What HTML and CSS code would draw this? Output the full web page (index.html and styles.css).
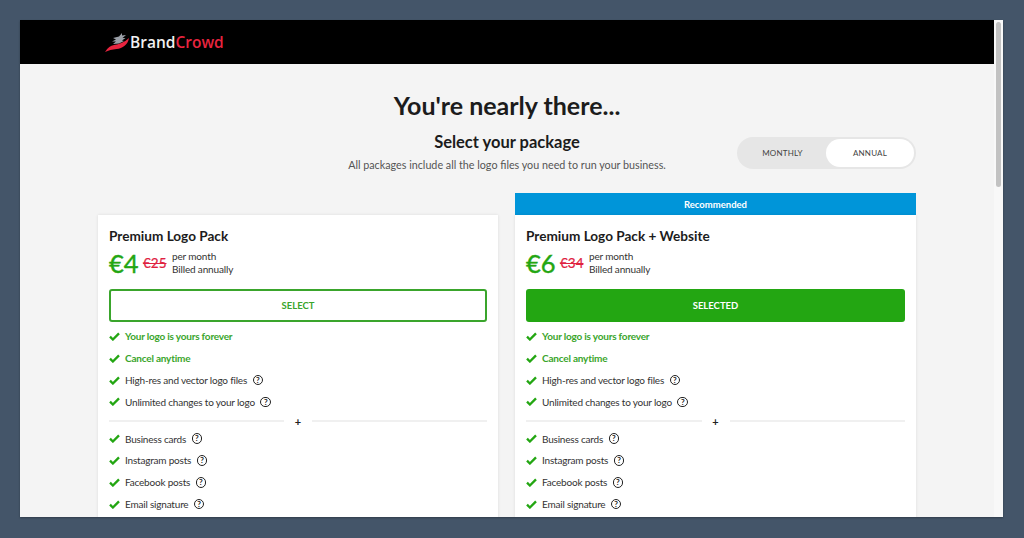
FILE: index.html
```html
<!DOCTYPE html>
<html lang="en">
<head>
<meta charset="utf-8">
<title>BrandCrowd</title>
<link rel="stylesheet" href="styles.css">
</head>
<body>
<div class="window">
  <div class="page">
    <header class="topbar">
      <div class="logo">
        <svg class="logo-mark" width="24" height="20" viewBox="0 0 24 20">
          <path d="M8 6 L14 4.500 L17 1 L17 3.500 L21 3 L17.500 6 L20.500 6 L17 8.500 L19 9 L14 11.500 L8 12 L11 9.500 L7 9.500 L11 7.500 Z" fill="#9a9fa7"/>
          <path d="M0 20 C3 15.500 5.500 13.500 9 13 C14 12.300 20 10 24 6 C23 12.500 17.500 16.500 11.500 17 C7 17.300 3.500 18.500 0 20 Z" fill="#e8243f"/>
        </svg>
        <span class="logo-text">Brand<span class="logo-red">Crowd</span></span>
      </div>
    </header>
    <main class="content">
      <h1 class="title">You're nearly there...</h1>
      <div class="intro">
        <div class="intro-text">
          <h2 class="subtitle">Select your package</h2>
          <p class="note">All packages include all the logo files you need to run your business.</p>
        </div>
        <div class="toggle">
          <span class="toggle-opt">MONTHLY</span>
          <span class="toggle-opt toggle-on">ANNUAL</span>
        </div>
      </div>
      <div class="plans">
        <section class="plan">
          <div class="card">
            <h3 class="plan-name">Premium Logo Pack</h3>
            <div class="price-row">
              <span class="price">€4</span>
              <span class="old-price">€25</span>
              <span class="price-note">per month<br>Billed annually</span>
            </div>
            <button class="btn btn-outline">SELECT</button>
            <ul class="features">
              <li class="feat feat-green"><svg class="check" viewBox="0 0 12 10"><path d="M1 5.200 L4.200 8.300 L11 1.500" fill="none" stroke="#23a612" stroke-width="2.600"/></svg>Your logo is yours forever</li>
              <li class="feat feat-green"><svg class="check" viewBox="0 0 12 10"><path d="M1 5.200 L4.200 8.300 L11 1.500" fill="none" stroke="#23a612" stroke-width="2.600"/></svg>Cancel anytime</li>
              <li class="feat"><svg class="check" viewBox="0 0 12 10"><path d="M1 5.200 L4.200 8.300 L11 1.500" fill="none" stroke="#23a612" stroke-width="2.600"/></svg>High-res and vector logo files<span class="help">?</span></li>
              <li class="feat"><svg class="check" viewBox="0 0 12 10"><path d="M1 5.200 L4.200 8.300 L11 1.500" fill="none" stroke="#23a612" stroke-width="2.600"/></svg>Unlimited changes to your logo<span class="help">?</span></li>
            </ul>
            <div class="divider"><span class="plus">+</span></div>
            <ul class="features">
              <li class="feat"><svg class="check" viewBox="0 0 12 10"><path d="M1 5.200 L4.200 8.300 L11 1.500" fill="none" stroke="#23a612" stroke-width="2.600"/></svg>Business cards<span class="help">?</span></li>
              <li class="feat"><svg class="check" viewBox="0 0 12 10"><path d="M1 5.200 L4.200 8.300 L11 1.500" fill="none" stroke="#23a612" stroke-width="2.600"/></svg>Instagram posts<span class="help">?</span></li>
              <li class="feat"><svg class="check" viewBox="0 0 12 10"><path d="M1 5.200 L4.200 8.300 L11 1.500" fill="none" stroke="#23a612" stroke-width="2.600"/></svg>Facebook posts<span class="help">?</span></li>
              <li class="feat"><svg class="check" viewBox="0 0 12 10"><path d="M1 5.200 L4.200 8.300 L11 1.500" fill="none" stroke="#23a612" stroke-width="2.600"/></svg>Email signature<span class="help">?</span></li>
            </ul>
          </div>
        </section>
        <section class="plan">
          <div class="banner">Recommended</div>
          <div class="card">
            <h3 class="plan-name">Premium Logo Pack + Website</h3>
            <div class="price-row">
              <span class="price">€6</span>
              <span class="old-price">€34</span>
              <span class="price-note">per month<br>Billed annually</span>
            </div>
            <button class="btn btn-solid">SELECTED</button>
            <ul class="features">
              <li class="feat feat-green"><svg class="check" viewBox="0 0 12 10"><path d="M1 5.200 L4.200 8.300 L11 1.500" fill="none" stroke="#23a612" stroke-width="2.600"/></svg>Your logo is yours forever</li>
              <li class="feat feat-green"><svg class="check" viewBox="0 0 12 10"><path d="M1 5.200 L4.200 8.300 L11 1.500" fill="none" stroke="#23a612" stroke-width="2.600"/></svg>Cancel anytime</li>
              <li class="feat"><svg class="check" viewBox="0 0 12 10"><path d="M1 5.200 L4.200 8.300 L11 1.500" fill="none" stroke="#23a612" stroke-width="2.600"/></svg>High-res and vector logo files<span class="help">?</span></li>
              <li class="feat"><svg class="check" viewBox="0 0 12 10"><path d="M1 5.200 L4.200 8.300 L11 1.500" fill="none" stroke="#23a612" stroke-width="2.600"/></svg>Unlimited changes to your logo<span class="help">?</span></li>
            </ul>
            <div class="divider"><span class="plus">+</span></div>
            <ul class="features">
              <li class="feat"><svg class="check" viewBox="0 0 12 10"><path d="M1 5.200 L4.200 8.300 L11 1.500" fill="none" stroke="#23a612" stroke-width="2.600"/></svg>Business cards<span class="help">?</span></li>
              <li class="feat"><svg class="check" viewBox="0 0 12 10"><path d="M1 5.200 L4.200 8.300 L11 1.500" fill="none" stroke="#23a612" stroke-width="2.600"/></svg>Instagram posts<span class="help">?</span></li>
              <li class="feat"><svg class="check" viewBox="0 0 12 10"><path d="M1 5.200 L4.200 8.300 L11 1.500" fill="none" stroke="#23a612" stroke-width="2.600"/></svg>Facebook posts<span class="help">?</span></li>
              <li class="feat"><svg class="check" viewBox="0 0 12 10"><path d="M1 5.200 L4.200 8.300 L11 1.500" fill="none" stroke="#23a612" stroke-width="2.600"/></svg>Email signature<span class="help">?</span></li>
            </ul>
          </div>
        </section>
      </div>
    </main>
  </div>
  <div class="scrollbar"><div class="thumb"></div></div>
</div>
</body>
</html>
```
FILE: styles.css
```css
* { box-sizing: border-box; }
html, body { margin: 0; height: 100%; }
body {
  background: #445569;
  padding: 20px 21px 21px 20px;
  overflow: hidden;
  font-family: Lato, "Liberation Sans", sans-serif;
  color: #222;
}
.window {
  display: flex;
  height: 497px;
  overflow: hidden;
  background: #f4f4f4;
  box-shadow: 0 1px 2px rgba(0,0,0,.3);
}
.page { flex: 1; min-width: 0; overflow: hidden; }
.scrollbar {
  width: 9px;
  background: #f8f8f8;
  padding: 2px 2px 0;
}
.thumb { width: 5px; height: 165px; border-radius: 3px; background: #c2c2c2; }
.topbar {
  height: 44px;
  background: #000;
  padding-left: 85px;
  display: flex;
  align-items: center;
}
.logo { display: flex; align-items: center; gap: 1px; }
.logo-mark { display: block; }
.logo-text {
  font-family: "Open Sans", sans-serif;
  font-size: 15.500px;
  font-weight: 600;
  color: #f1f1f1;
  line-height: 20px;
}
.logo-red { color: #e8243f; }
.content { padding: 0 78px; }
.title {
  margin: 0;
  padding-top: 24px;
  text-align: center;
  font-size: 25px;
  line-height: 34px;
  font-weight: 700;
  color: #1c1c1c;
}
.intro {
  display: grid;
  grid-template-columns: 1fr auto 1fr;
  align-items: start;
  margin-top: 8px;
  height: 63px;
}
.intro-text { grid-column: 2; text-align: center; }
.subtitle {
  margin: 0;
  font-size: 16.500px;
  line-height: 24px;
  font-weight: 700;
  color: #1c1c1c;
}
.note { margin: 3px 0 0; font-size: 10.750px; line-height: 16px; color: #555; }
.toggle {
  grid-column: 3;
  justify-self: end;
  display: flex;
  width: 179px;
  height: 32px;
  margin-top: 7px;
  border-radius: 16px;
  background: #e6e6e6;
  padding: 2px;
  font-size: 8px;
  color: #444;
}
.toggle-opt {
  flex: 1;
  display: flex;
  align-items: center;
  justify-content: center;
  letter-spacing: .2px;
}
.toggle-on {
  flex: 0 0 88px;
  background: #fff;
  border-radius: 14px;
}
.plans {
  display: grid;
  grid-template-columns: 400px 401px;
  column-gap: 17px;
  align-items: end;
}
.banner {
  height: 22px;
  background: #0095d9;
  color: #fff;
  font-size: 9.500px;
  font-weight: 700;
  line-height: 23px;
  text-align: center;
}
.card {
  background: #fff;
  padding: 11px 11px 0;
  height: 320px;
  box-shadow: 0 0 3px rgba(0,0,0,.1);
}
.plan-name {
  margin: 0;
  font-size: 13.600px;
  line-height: 20px;
  font-weight: 700;
  color: #1c1c1c;
}
.price-row { display: flex; align-items: center; margin-top: 2px; height: 30px; }
.price {
  font-size: 25.500px;
  line-height: 30px;
  color: #23a612;
  font-weight: 400;
  -webkit-text-stroke: .4px #23a612;
  width: 34px;
}
.old-price {
  font-size: 13.500px;
  color: #e0213f;
  -webkit-text-stroke: .2px #e0213f;
  text-decoration: line-through;
  width: 29px;
}
.price-note { font-size: 10px; line-height: 13.500px; color: #333; letter-spacing: -.15px; }
.btn {
  display: block;
  width: 100%;
  height: 33px;
  margin-top: 11px;
  border-radius: 3px;
  font-family: inherit;
  font-size: 9.500px;
  font-weight: 700;
}
.btn-outline { background: #fff; border: 2px solid #3aa52c; color: #3aa52c; }
.btn-solid { background: #23a612; border: 0; color: #fff; }
.features { list-style: none; margin: 0; padding: 0; }
.plan .btn + .features { margin-top: 3.600px; }
.feat {
  display: flex;
  align-items: center;
  height: 21.800px;
  font-size: 10px;
  letter-spacing: -.2px;
  color: #333;
}
.feat-green { color: #3aa52c; font-weight: 700; }
.check { width: 11px; height: 9px; margin-right: 5px; flex: none; }
.help {
  width: 10.500px;
  height: 10.500px;
  margin-left: 5.500px;
  border: 1.400px solid #222;
  border-radius: 50%;
  font-size: 8px;
  line-height: 8px;
  font-weight: 700;
  letter-spacing: 0;
  text-align: center;
  color: #222;
}
.divider {
  display: flex;
  align-items: center;
  gap: 10px;
  height: 15px;
  padding-top: 2px;
  font-size: 11px;
  font-weight: 700;
  color: #222;
}
.divider::before, .divider::after {
  content: "";
  flex: 1;
  height: 2px;
  background: #f0f0f0;
}
.plus { width: 8px; text-align: center; }
```
